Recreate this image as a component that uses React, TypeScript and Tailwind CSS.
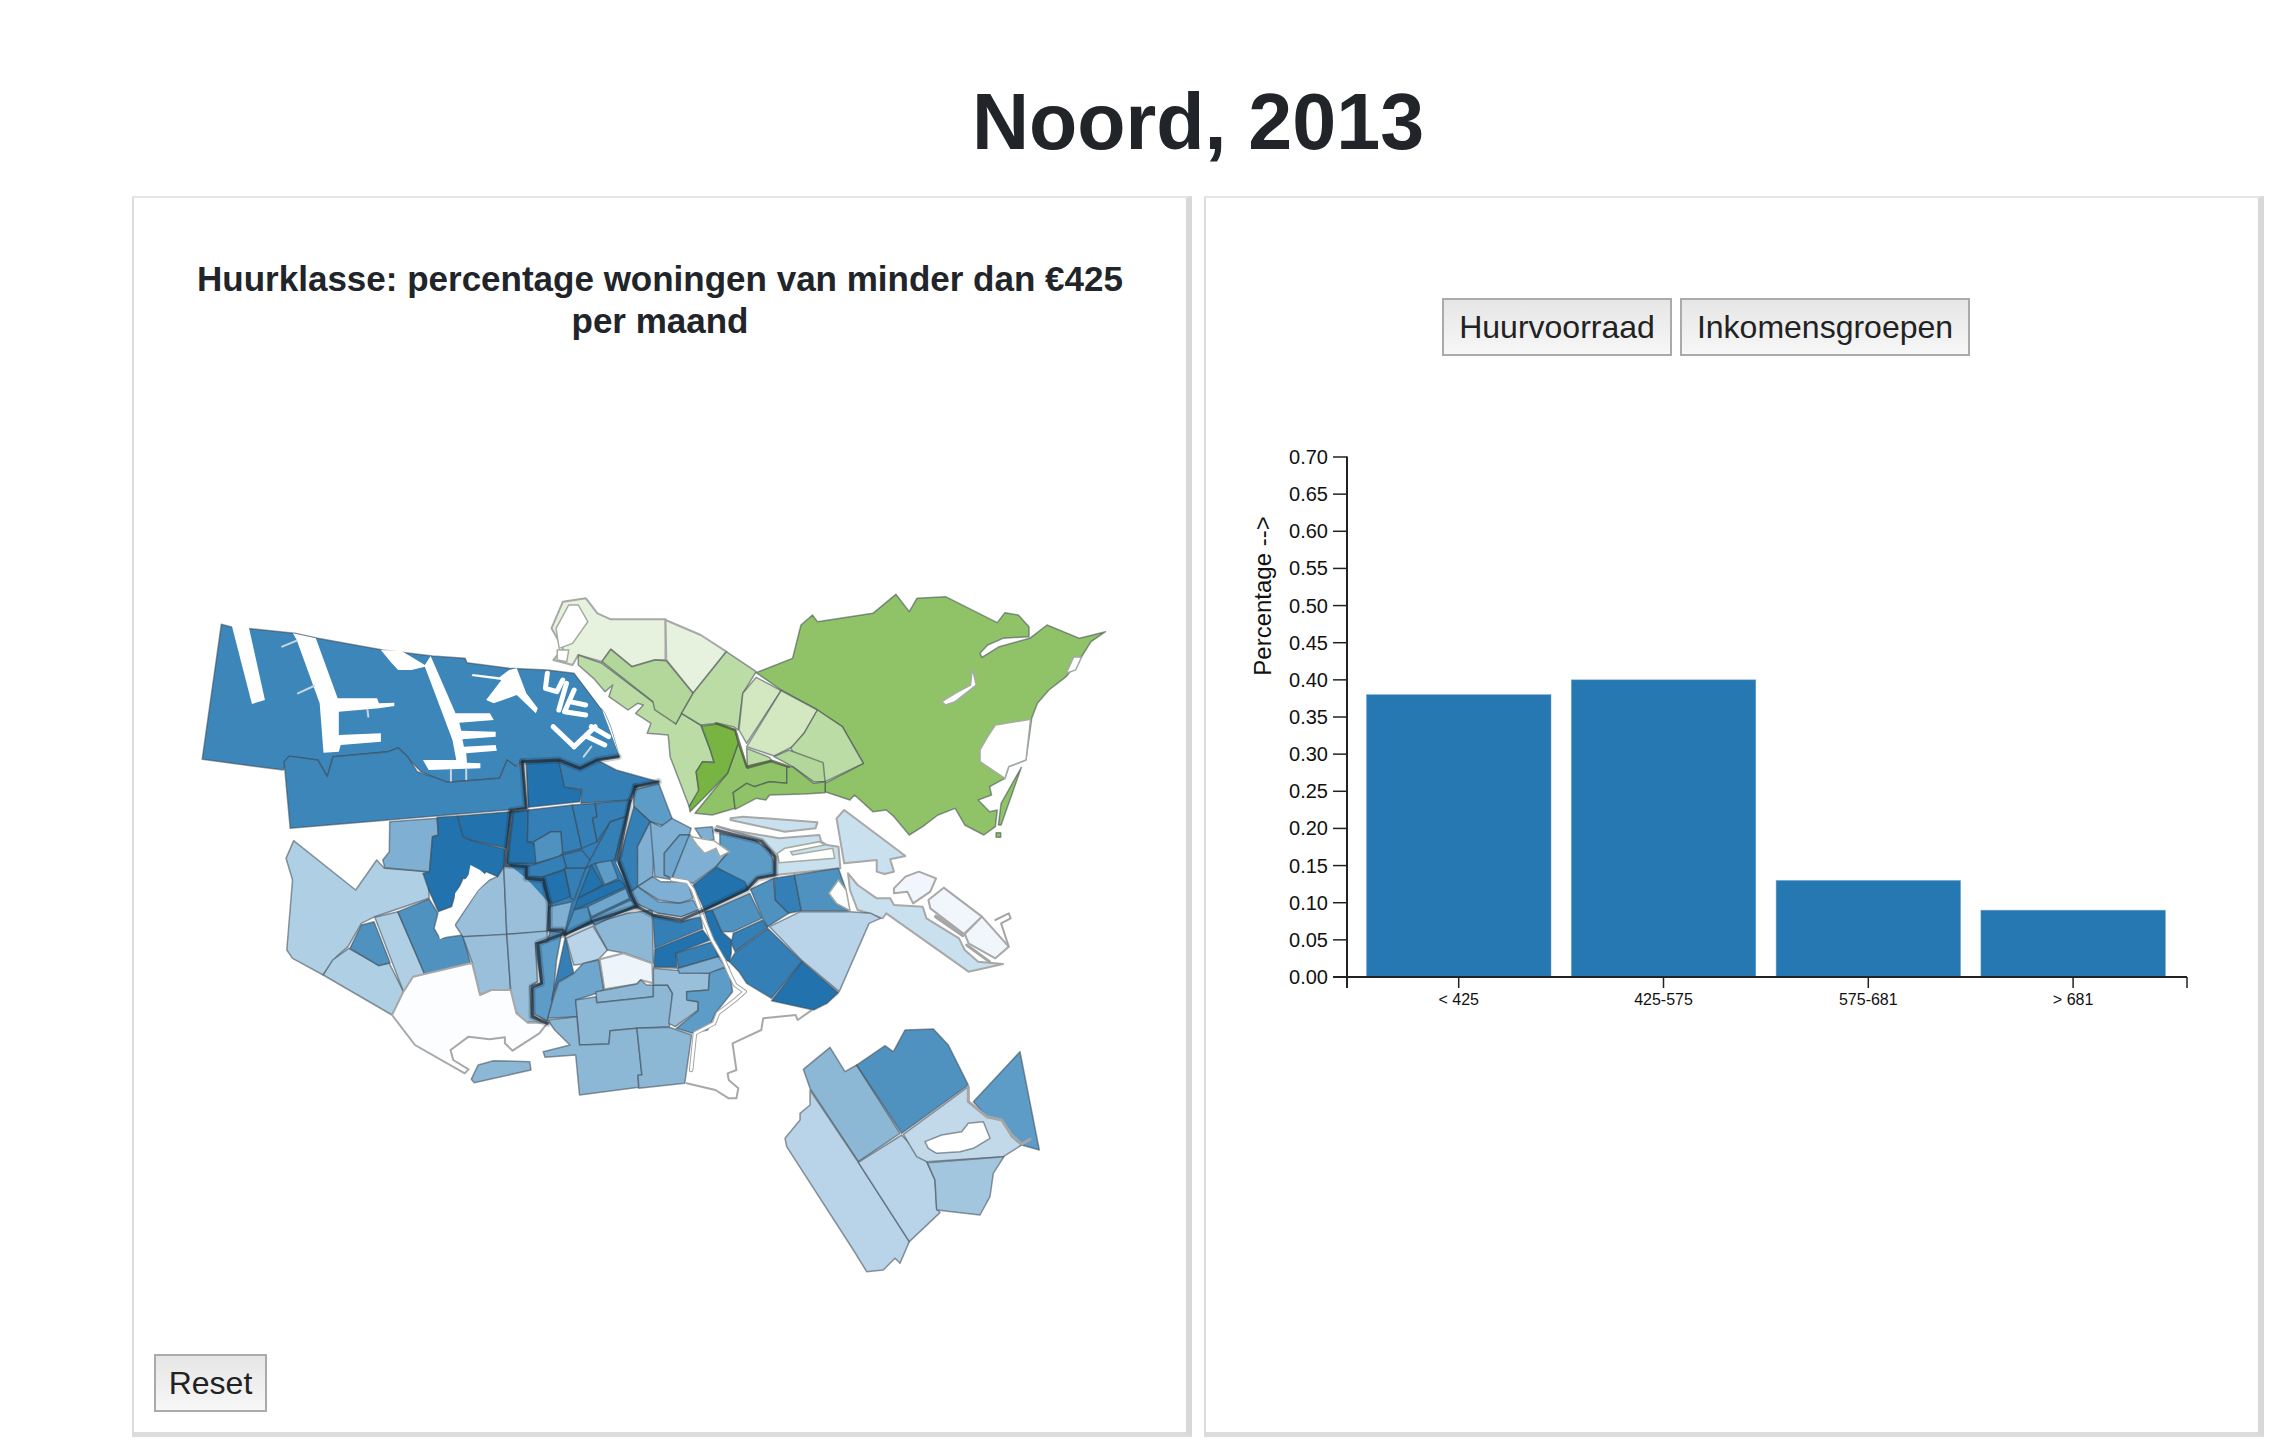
type Cell = [string, string];

const DEEP = "#2273ad";
const B1 = "#357fb7";
const HARBOR = "#3d86ba";
const B2 = "#4f92c0";
const B3 = "#5d9cc7";
const B4 = "#6ea6cd";
const B5 = "#7fb0d3";
const B6 = "#8cb8d6";
const B7 = "#99bfdb";
const B8 = "#aecfe4";
const B9 = "#b9d3e8";
const B10 = "#c9e0ee";
const B11 = "#edf4fa";
const G1 = "#90c368";
const G2 = "#77b442";
const G3 = "#bcdca5";
const G4 = "#b3d69a";
const G5 = "#d3e8c0";
const G6 = "#e6f2de";

// the palest cells get a wider grey edge, as on the original map
const PALE = [B10, B11, "#f0f6fb", "#fcfdff", G6];

// west part, traced in the coordinates of the first crop
const west: Cell[] = [
  [HARBOR, "108,163 132,170 300,190 360,205 530,240 660,258 745,265 750,278 860,295 960,300 1030,310 1110,430 1125,470 1148,560 1090,570 1045,595 1000,572 895,575 875,590 855,570 835,625 700,637 660,620 630,605 600,570 570,535 545,545 400,560 385,620 360,570 285,560 270,600 58,568"],
  [HARBOR, "272,575 285,558 360,570 385,620 400,560 545,545 570,533 595,560 620,605 660,620 700,637 835,625 855,570 880,590 895,578 905,715 288,775"],
  [DEEP, "905,578 990,572 1005,650 1050,660 1045,695 910,712"],
  [B1, "990,572 1045,595 1090,570 1140,600 1250,635 1190,650 1175,690 1048,700 1050,658 1005,652"],
  [B5, "548,755 672,745 675,795 660,800 652,905 535,893 530,870 547,845"],
  [DEEP, "672,742 725,738 740,800 760,810 850,838 848,885 830,920 800,905 780,935 740,925 715,990 710,1010 675,1025 650,960 635,910 652,905 660,800 675,795"],
  [DEEP, "725,738 865,725 852,835 760,810 740,800"],
  [DEEP, "870,725 910,720 908,815 930,825 930,880 855,880 860,820"],
  [B1, "910,720 1025,705 1050,835 1000,850 995,785 970,785 925,815 908,815"],
  [B1, "1025,705 1085,700 1090,740 1078,745 1090,815 1050,835"],
  [B1, "1085,700 1175,690 1165,740 1125,755 1090,815 1078,745 1090,740"],
  [B2, "925,815 970,785 995,785 1000,850 995,855 990,860 930,880"],
  [B1, "1000,855 1050,840 1075,875 1060,895 1010,895"],
  [B1, "930,882 1000,855 1010,895 950,920 905,920 905,890"],
  [DEEP, "950,920 1005,900 1020,980 972,1000 962,985 950,950"],
  [B1, "1005,895 1060,895 1030,990 1022,985"],
  [DEEP, "1075,885 1105,945 1040,985"],
  [B3, "1085,880 1125,865 1145,925 1110,945"],
  [B1, "1125,755 1165,740 1135,870 1085,880 1075,885 1060,895"],
  [DEEP, "1110,945 1150,930 1165,950 1030,1020 1040,985"],
  [B4, "1065,1010 1165,955 1175,985 1075,1040"],
  [B4, "1075,1045 1178,990 1190,1005 1085,1065 1075,1050"],
  [B2, "1030,1020 1065,1010 1075,1055 1005,1095"],
  [B5, "965,1010 1025,995 1005,1090 960,1080"],
];

// fills the slivers between the hand-traced centre cells
const centreBacking = "870,725 1180,690 1140,880 1195,1010 1005,1095 965,1000 905,925 855,880";

const westWater = [
  "135,165 188,402 222,390 180,172",
  "295,190 355,205 412,385 515,385 520,400 560,398 560,408 520,415 415,425 415,495 525,490 525,515 420,525 415,545 375,548 365,400 305,210",
  "525,240 578,242 640,285 655,258 720,430 810,430 820,450 730,458 735,482 825,485 825,500 738,508 742,530 825,525 828,542 748,550 750,578 785,580 785,595 650,600 635,570 722,570 712,510 640,290 605,300 570,300 550,275",
  "880,295 905,370 935,415 930,430 880,375 820,400 800,390 840,330 762,318 765,312 835,322 860,300",
  "1030,305 1110,430 1125,470 1148,558 1120,470 1090,380",
];

const westCanals = [
  "960,310 955,355 985,365 1000,330",
  "1010,340 990,420",
  "1030,360 1005,425 1060,435",
  "1018,395 1060,405",
  "975,470 1030,530",
  "1030,530 1085,470",
  "1065,500 1110,525",
  "1075,470 1120,500",
];

const westInlets = [
  "267,230 305,212",
  "308,370 350,348",
  "490,420 492,440",
  "1055,560 1075,530",
  "708,600 708,632",
  "748,596 748,628",
];

// east part, traced in the coordinates of the second crop
const east: Cell[] = [
  [G1, "565,308 660,265 682,165 712,135 725,155 870,130 930,73 965,125 985,85 1060,80 1195,158 1215,128 1250,135 1278,170 1278,200 1210,205 1170,225 1150,250 1155,262 1200,230 1280,205 1325,165 1410,205 1478,185 1440,215 1410,270 1375,320 1330,360 1300,400 1285,445 1270,570 1225,590 1215,625 1175,650 1180,675 1145,690 1175,725 1195,720 1190,770 1160,795 1110,765 1085,715 1040,735 1000,770 965,795 925,740 905,720 870,725 822,675 810,690 745,665 745,640 845,580 790,470 725,420 630,360"],
  [G1, "1258,592 1205,765 1198,765 1205,700"],
  [G1, "1192,788 1204,788 1204,802 1192,802"],
  [G6, "60,95 120,85 150,130 185,148 328,148 328,270 300,270 240,290 185,238 162,275 100,255 85,285 35,270 60,235 30,175"],
  [G6, "328,150 420,195 487,245 400,370 330,270"],
  [G3, "100,255 162,280 300,400 355,462 370,430 420,465 445,540 455,575 425,575 408,605 415,665 390,710 340,560 335,495 280,490 290,460 250,430 270,405 255,400 230,420 180,380 190,345 170,365 140,325 100,285"],
  [G4, "162,275 185,238 240,290 300,270 330,272 400,370 370,430 355,462 300,420 295,395"],
  [G3, "487,245 565,305 530,370 518,480 505,470 465,460 420,465 370,430 400,370"],
  [G1, "518,520 542,595 605,575 645,590 645,640 600,635 560,650 540,640 505,668 510,715 450,735 405,730 490,610"],
  [G2, "422,468 465,462 510,480 518,520 490,610 440,670 392,725 390,710 415,660 408,605 425,575 455,578 445,540"],
  [G5, "565,322 630,362 540,520 520,480 530,370"],
  [G5, "630,362 725,420 690,490 660,530 612,558 540,530"],
  [G3, "725,420 790,470 845,580 745,635 712,630 655,535 690,490"],
  [G3, "540,535 600,562 605,572 542,593"],
  [G4, "612,560 650,540 740,578 745,635 715,635 660,590"],
  [G1, "645,590 660,590 715,640 745,635 745,668 690,672 600,675 590,690 565,685 510,718 505,668 540,640 560,650 600,635 645,640"],
  [B10, "498,745 530,740 725,757 720,775 640,785 498,750"],
  [B10, "462,768 500,780 625,805 730,795 735,815 750,825 780,830 785,895 615,915 612,850 580,810"],
  [B10, "775,745 795,720 955,858 915,868 925,905 900,912 880,905 880,870 795,880"],
  [B10, "805,910 830,945 880,985 915,985 925,1005 1000,1010 1010,1045 1095,1105 1110,1140 1145,1175 1210,1182 1120,1205 905,1030 895,1045 860,1030 830,1020 810,960"],
  ["#f0f6fb", "925,955 955,920 990,905 1035,925 1020,965 975,1000 960,965 925,970"],
  ["#f0f6fb", "1015,990 1055,953 1155,1040 1108,1092 1020,1015"],
  ["#f0f6fb", "1110,1092 1155,1040 1225,1130 1190,1165 1120,1120"],
  [B3, "245,660 310,640 345,745 330,770 288,755 245,710"],
  [B1, "245,710 288,755 255,830 258,950 235,965 205,880"],
  [B5, "288,755 310,770 297,850 295,920 255,950 255,830"],
  [B5, "288,755 315,770 345,745 395,775 390,795 365,795 325,850 325,915 350,930 300,920 295,850"],
  [B4, "365,795 392,795 345,925 325,915 325,850"],
  [B5, "390,795 410,810 470,825 490,850 460,890 400,940 345,925"],
  [B5, "405,775 450,770 455,810 425,810"],
  [B3, "470,790 560,810 600,840 612,880 612,915 565,925 545,955 460,890 490,850 470,825"],
  [DEEP, "460,892 535,935 545,958 430,1020 400,945"],
  [B5, "255,950 295,920 315,935 385,935 400,985 365,1000 310,990"],
  [B4, "235,970 255,950 310,995 365,1000 400,990 415,1020 370,1040 310,1030 250,1000"],
  [B1, "295,1035 310,1040 365,1055 420,1040 425,1075 300,1135"],
  [DEEP, "300,1138 425,1080 445,1110 355,1150 358,1190 298,1190"],
  [B1, "355,1150 450,1115 465,1160 362,1195"],
  [B5, "298,1192 358,1192 365,1210 440,1210 485,1190 465,1160 362,1195"],
  [DEEP, "430,1025 450,1020 475,1085 500,1110 500,1150 495,1175 465,1160"],
  [B2, "450,1020 548,970 580,1045 505,1085 475,1085"],
  [B2, "550,958 610,925 615,990 650,1030 595,1070 582,1045"],
  [B1, "612,925 665,915 683,1022 650,1030 615,990"],
  [B2, "665,915 780,895 800,960 760,965 775,1000 810,1022 683,1022"],
  [B1, "505,1090 582,1050 595,1072 510,1145 500,1120"],
  [B1, "510,1148 595,1075 685,1175 605,1285 540,1240 520,1205 495,1175"],
  [DEEP, "685,1175 780,1268 750,1300 715,1320 605,1292"],
  [B9, "600,1070 680,1025 810,1025 865,1030 890,1045 860,1060 782,1265 685,1172"],
];

const eastWater = [
  "1050,395 1085,370 1125,345 1130,295 1140,345 1085,395 1060,405",
  "1375,310 1395,260 1415,262 1400,300",
  "1170,500 1190,465 1282,448 1270,570 1225,590 1215,625 1150,575 1150,540",
  "75,105 100,105 125,155 85,220 50,235 42,175",
  "45,240 75,240 70,275 45,270",
  "625,878 770,865 765,835 660,855 655,845 745,825 730,815 640,835 620,850",
  "395,800 430,808 455,812 470,825 495,845 470,860 460,835 430,850 410,825",
  "755,970 780,930 800,960 805,990 810,1022 775,1000",
];

const ROAD = "345,928 385,935 400,960 425,1040 450,1110 480,1170 497,1215 510,1245 535,1265 510,1290 465,1330 455,1360 405,1390 395,1500";

// south-west part, traced in the coordinates of the third crop
const south: Cell[] = [
  [B8, "88,122 250,270 305,180 325,205 328,205 440,215 442,295 300,350 265,370 230,440 200,470 165,525 85,475 70,450 85,240 68,175"],
  [B8, "232,445 310,495 338,490 375,575 345,645 165,525 190,480"],
  [B2, "298,365 340,488 310,497 235,445 265,375"],
  [B8, "300,352 360,335 430,520 375,575"],
  [B2, "360,335 442,297 465,340 455,385 470,415 530,405 550,490 430,522"],
  [B7, "510,375 570,270 600,240 620,230 637,200 645,405 530,410"],
  [B7, "637,198 695,205 695,235 740,240 755,300 750,395 645,403"],
  [B7, "530,410 645,403 655,570 605,570 575,585 555,490"],
  [B7, "645,403 750,393 752,425 720,430 725,545 705,560 710,640 740,668 690,665 665,630 655,570"],
  [B3, "720,430 752,425 757,395 790,390 775,480 765,600 750,665 715,640 710,565 735,550 725,480"],
  [B1, "798,410 820,520 780,545 762,600"],
  [B5, "755,320 818,305 795,385 752,392"],
  [B9, "800,415 870,378 908,450 885,478 845,492 820,495"],
  [B6, "870,370 960,340 1025,330 1028,490 955,460 908,450"],
  [B11, "888,478 950,460 1025,490 1027,550 995,540 985,552 900,568"],
  [B4, "820,520 845,490 885,480 898,570 880,580 825,600 830,650 752,655 765,600 780,548"],
  [B6, "878,575 985,552 995,540 1010,555 1028,555 1028,590 880,608"],
  [B6, "825,600 878,590 880,608 1028,590 1028,555 1065,555 1078,580 1070,680 985,685 915,692 912,732 835,735"],
  [B6, "752,660 828,650 835,735 912,732 915,692 985,685 998,825 988,828 990,862 835,885 825,765 745,772 740,755 810,735 770,690"],
  [B6, "985,685 1070,682 1128,705 1110,850 990,865 988,825 998,825"],
  [B7, "1028,505 1175,520 1172,570 1115,575 1118,600 1145,605 1145,630 1085,680 1068,670 1078,580 1065,555 1028,555"],
  [B3, "1175,515 1225,500 1235,575 1190,640 1170,690 1130,700 1088,685 1145,632 1145,605 1115,600 1115,575 1172,570"],
  [B6, "570,795 610,782 705,785 708,810 560,848 552,838"],
  ["#fcfdff", "400,530 550,490 555,492 575,585 605,570 655,570 670,640 700,668 752,668 730,700 660,752 640,730 640,712 600,718 545,710 498,750 505,780 545,808 535,820 405,735 345,645 375,575"],
];

const southWater = ["465,385 505,340 510,280 545,225 550,195 575,210 600,235 570,270 510,370 505,400 470,418"];

const southShore = "1440,632 1405,660 1400,645 1315,655 1310,690 1235,730 1245,810 1222,820 1225,840 1250,865 1245,895 1225,895 1190,870 1115,850";

// south-east island, traced in the coordinates of the fourth crop
const island: Cell[] = [
  [B6, "490,868 570,802 615,875 650,855 780,1060 655,1145 510,925"],
  [B2, "650,855 735,797 760,815 795,750 880,747 925,795 985,915 785,1060"],
  [B9, "510,930 655,1147 808,1385 780,1450 765,1435 730,1470 680,1475 640,1410 440,1100 435,1075 480,1020 480,1000 510,975"],
  [B9, "655,1147 785,1065 860,1145 885,1200 890,1285 900,1298 808,1385"],
  ["#c2d9ea", "790,1063 985,920 985,965 1040,1010 1085,1020 1115,1070 1145,1095 1090,1130 860,1145 830,1130"],
  ["#ffffff", "855,1085 905,1065 965,1055 985,1030 1030,1025 1050,1075 1000,1105 960,1115 890,1120 865,1105"],
  ["#a3c6df", "862,1148 1092,1130 1060,1180 1050,1250 1020,1305 890,1290 885,1200"],
  [B3, "1000,965 1140,815 1198,1110 1145,1095 1115,1065 1085,1020 1040,1010"],
];

// stadsdeel borders, in first-crop coordinates
const thickWest = [
  "865,725 855,830 852,885 905,890 905,925 950,930 965,1000 965,1080 1000,1080 1005,1090 935,1120 945,1240 920,1250 920,1340 960,1360",
  "895,575 905,715 865,722",
  "895,575 990,570 1045,595 1090,570 1145,560",
  "1190,650 1250,635",
  "1190,650 1175,700 1145,870 1180,975 1195,1010 1235,1035 1310,1050 1370,1020 1480,960 1510,925 1555,915 1555,860 1520,815 1400,780",
  "1195,1010 1075,1055 1005,1095",
];

const FRAME_WEST = "translate(180 570) scale(0.38265 0.33333)";
const FRAME_EAST = "translate(540 570) scale(0.38265 0.33333)";
const FRAME_SOUTH = "translate(260 800) scale(0.38265 0.33333)";
const FRAME_ISLAND = "translate(640 780) scale(0.33333 0.33333)";

const Cells = ({ cells }: { cells: Cell[] }) => (
  <>
    {cells.map(([fill, points], i) => {
      const pale = PALE.includes(fill);
      return (
        <polygon
          key={i}
          points={points}
          fill={fill}
          stroke={pale ? "#a8a8a8" : "#3d4750"}
          strokeOpacity={pale ? 1 : 0.55}
          strokeWidth={pale ? 2 : 1.5}
          strokeLinejoin="round"
          vectorEffect="non-scaling-stroke"
        />
      );
    })}
  </>
);

const Water = ({ shapes, edge }: { shapes: string[]; edge?: string }) => (
  <>
    {shapes.map((points, i) => (
      <polygon
        key={i}
        points={points}
        fill="#ffffff"
        stroke={edge ?? "none"}
        strokeWidth={1.5}
        vectorEffect="non-scaling-stroke"
      />
    ))}
  </>
);

const Line = ({ points, color, width, opacity = 1 }: { points: string; color: string; width: number; opacity?: number }) => (
  <polyline
    points={points}
    fill="none"
    stroke={color}
    strokeWidth={width}
    strokeOpacity={opacity}
    strokeLinejoin="round"
    strokeLinecap="round"
    vectorEffect="non-scaling-stroke"
  />
);

const AmsterdamMap = () => (
  <svg className="block h-[730px] w-[960px]" viewBox="180 570 960 730">
    <g transform={FRAME_SOUTH}>
      <Cells cells={south} />
      <Line points={southShore} color="#a8a8a8" width={2} />
    </g>
    <g transform={FRAME_WEST}>
      <polygon points={centreBacking} fill={B1} />
      <Cells cells={west} />
      <Water shapes={westWater} />
      {westCanals.map((c, i) => (
        <Line key={i} points={c} color="#ffffff" width={5} />
      ))}
      {westInlets.map((c, i) => (
        <Line key={i} points={c} color="#c9d6de" width={2} />
      ))}
    </g>
    <g transform={FRAME_SOUTH}>
      <Water shapes={southWater} />
    </g>
    <g transform={FRAME_EAST}>
      <Cells cells={east} />
      <Water shapes={eastWater} edge="#a3aca0" />
      <Line points={ROAD} color="#a6a6a6" width={4.5} />
      <Line points={ROAD} color="#ffffff" width={2.5} />
      <Line points="1190,1050 1225,1030 1230,1045 1205,1060 1225,1130" color="#a6a6a6" width={2} />
      <Line points="1035,1040 1105,1095" color="#a6a6a6" width={4} />
      <Line points="1115,1125 1175,1175" color="#a6a6a6" width={3} />
      <Line points="460,460 510,480 540,590 605,572 650,590" color="#4d5f3c" width={2.5} opacity={0.8} />
    </g>
    <g transform={FRAME_ISLAND}>
      <Cells cells={island} />
      <Line points="985,920 985,965 1040,1010 1085,1020 1115,1065 1145,1092 1170,1078" color="#a6a6a6" width={3} />
    </g>
    <g transform={FRAME_WEST}>
      {thickWest.map((t, i) => (
        <g key={i}>
          <Line points={t} color="#1d2b38" width={7} opacity={0.22} />
          <Line points={t} color="#1d2b38" width={3} opacity={0.7} />
        </g>
      ))}
    </g>
  </svg>
);

const bars = [
  { label: "< 425", value: 0.38 },
  { label: "425-575", value: 0.4 },
  { label: "575-681", value: 0.13 },
  { label: "> 681", value: 0.09 },
];

const yTicks = ["0.00", "0.05", "0.10", "0.15", "0.20", "0.25", "0.30", "0.35", "0.40", "0.45", "0.50", "0.55", "0.60", "0.65", "0.70"];

const BarChart = () => {
  const base = 977;
  const perUnit = 520 / 0.7;
  return (
    <svg className="block h-[580px] w-[960px]" viewBox="1240 440 960 580" fontFamily="'Liberation Sans', Arial, sans-serif">
      {bars.map((b, i) => {
        const h = b.value * perUnit;
        return (
          <g key={b.label}>
            <rect x={1366.5 + i * 204.8} y={base - h} width={184.5} height={h} fill="#2678b2" stroke="#6fa5cd" strokeWidth={0.5} />
            <line x1={1458.7 + i * 204.8} x2={1458.7 + i * 204.8} y1={base} y2={988} stroke="#222" strokeWidth={1.5} />
            <text x={1458.7 + i * 204.8} y={1005} fontSize={16} textAnchor="middle" fill="#111">
              {b.label}
            </text>
          </g>
        );
      })}
      {yTicks.map((t, i) => {
        const y = base - (i * 520) / 14;
        return (
          <g key={t}>
            <line x1={1333} x2={1347} y1={y} y2={y} stroke="#222" strokeWidth={1.5} />
            <text x={1328} y={y + 7} fontSize={20} textAnchor="end" fill="#111">
              {t}
            </text>
          </g>
        );
      })}
      <line x1={1347} x2={1347} y1={456.5} y2={988} stroke="#222" strokeWidth={2} />
      <line x1={1333} x2={2187} y1={base} y2={base} stroke="#222" strokeWidth={2} />
      <line x1={2187} x2={2187} y1={base} y2={988} stroke="#222" strokeWidth={1.5} />
      <text transform="translate(1271 596) rotate(-90)" fontSize={24} textAnchor="middle" fill="#111">
        Percentage --&gt;
      </text>
    </svg>
  );
};

const buttonClass =
  "h-[58px] border-2 border-[#aaaaaa] bg-gradient-to-b from-[#e6e6e6] to-[#f7f7f7] text-[32px] text-[#222222]";

const panelClass =
  "flex h-[1241px] w-[1060px] flex-col border-t-2 border-r-[6px] border-b-[5px] border-l-2 border-t-[#e5e5e5] border-r-[#d8d8d8] border-b-[#dcdcdc] border-l-[#dddddd]";

export default function App() {
  return (
    <div className="min-h-[1446px] bg-white pl-[132px] font-['Liberation_Sans',Arial,sans-serif] text-[#212529]">
      <div className="w-[2132px]">
        <h1 className="flex h-[196px] items-center justify-center pt-[46px] text-[79px] font-bold leading-none">
          Noord, 2013
        </h1>
        <div className="flex gap-[12px]">
          <div className={panelClass}>
            <h2 className="h-[372px] px-[50px] pt-[60px] text-center text-[35px] font-bold leading-[42px]">
              Huurklasse: percentage woningen van minder dan €425 per maand
            </h2>
            <div className="pl-[46px]">
              <AmsterdamMap />
            </div>
            <div className="pl-[20px] pt-[54px]">
              <button className={`${buttonClass} w-[113px]`}>Reset</button>
            </div>
          </div>
          <div className={panelClass}>
            <div className="flex gap-[8px] pl-[236px] pt-[100px]">
              <button className={`${buttonClass} w-[230px]`}>Huurvoorraad</button>
              <button className={`${buttonClass} w-[290px]`}>Inkomensgroepen</button>
            </div>
            <div className="pl-[34px] pt-[84px]">
              <BarChart />
            </div>
          </div>
        </div>
      </div>
    </div>
  );
}
